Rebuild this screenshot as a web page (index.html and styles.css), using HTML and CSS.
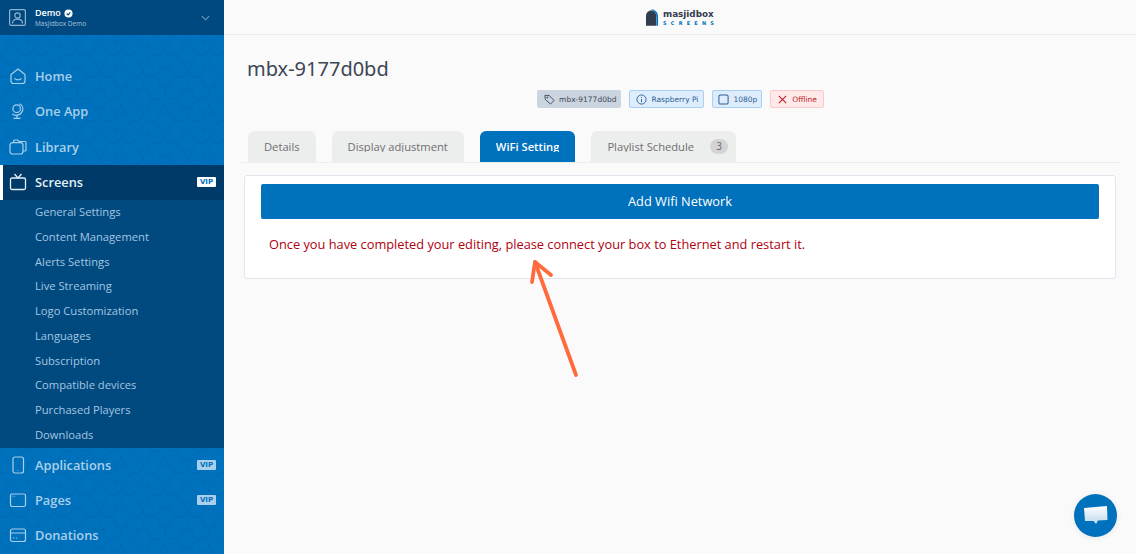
FILE: index.html
```html
<!DOCTYPE html>
<html lang="en">
<head>
<meta charset="utf-8">
<title>mbx-9177d0bd</title>
<link rel="stylesheet" href="styles.css">
</head>
<body>
<div class="app">
  <aside class="sidebar">
    <div class="account">
      <svg class="account-icon" viewBox="0 0 17 17" fill="none" stroke="currentColor" stroke-width="1.200"><rect x=".6" y=".6" width="15.800" height="15.800" rx="1.500"/><circle cx="8.500" cy="6.500" r="2.700"/><path d="M3.500 14.500c0-3 2-4.300 5-4.300s5 1.300 5 4.300"/></svg>
      <div class="account-text">
        <div class="account-name">Demo <svg class="verified" viewBox="0 0 10 10"><circle cx="5" cy="5" r="4.500" fill="#fff"/><path d="M3 5l1.500 1.500L7 3.800" fill="none" stroke="#004a80" stroke-width="1.200"/></svg></div>
        <div class="account-org">Masjidbox Demo</div>
      </div>
      <svg class="chevron" viewBox="0 0 10 6" fill="none" stroke="currentColor" stroke-width="1.200"><path d="M1 1l4 4 4-4"/></svg>
    </div>
    <nav class="nav">
      <a class="nav-item first">
        <svg class="nav-icon" viewBox="0 0 18 18" fill="none" stroke="currentColor" stroke-width="1.200"><path d="M2 7.500L9 2l7 5.500V14a2.500 2.500 0 0 1-2.500 2.500h-9A2.500 2.500 0 0 1 2 14z"/><path d="M5.500 11.500c2 1.500 5 1.500 7 0"/></svg>
        <span>Home</span>
      </a>
      <a class="nav-item">
        <svg class="nav-icon" viewBox="0 0 18 18" fill="none" stroke="currentColor" stroke-width="1.200"><circle cx="7.700" cy="6.700" r="3.800"/><path d="M10.500 1.800c3 1.500 4 4.500 3 7s-3.500 4.500-6.500 4.500c-1.500 0-2.700-.5-3.700-1.300"/><path d="M8 13.300v3M4.500 16.400h7"/></svg>
        <span>One App</span>
      </a>
      <a class="nav-item">
        <svg class="nav-icon" viewBox="0 0 18 18" fill="none" stroke="currentColor" stroke-width="1.200"><path d="M4.700 4.700V3a1 1 0 0 1 1-1h3l1.500 1.500H16a1 1 0 0 1 1 1V12a1 1 0 0 1-1 1h-2"/><rect x="1" y="4.700" width="13" height="11.300" rx="2.500"/></svg>
        <span>Library</span>
      </a>
      <a class="nav-item active">
        <svg class="nav-icon" viewBox="0 0 18 18" fill="none" stroke="currentColor" stroke-width="1.300"><rect x="1.500" y="5" width="15" height="11.500" rx="1.500"/><path d="M5.500 1l3.500 4 3.500-4"/></svg>
        <span>Screens</span>
        <b class="vip">VIP</b>
      </a>
      <div class="subnav">
        <a class="sub-item">General Settings</a>
        <a class="sub-item">Content Management</a>
        <a class="sub-item">Alerts Settings</a>
        <a class="sub-item">Live Streaming</a>
        <a class="sub-item">Logo Customization</a>
        <a class="sub-item">Languages</a>
        <a class="sub-item">Subscription</a>
        <a class="sub-item">Compatible devices</a>
        <a class="sub-item">Purchased Players</a>
        <a class="sub-item">Downloads</a>
      </div>
      <a class="nav-item">
        <svg class="nav-icon" viewBox="0 0 18 18" fill="none" stroke="currentColor" stroke-width="1.200"><rect x="4" y="1" width="10.500" height="16" rx="2"/><path d="M9 14v.6"/></svg>
        <span>Applications</span>
        <b class="vip">VIP</b>
      </a>
      <a class="nav-item">
        <svg class="nav-icon" viewBox="0 0 18 18" fill="none" stroke="currentColor" stroke-width="1.200"><rect x="1.500" y="3" width="15" height="12.500" rx="1.800"/><path d="M3.500 5.300h.6M5.500 5.300h.6"/></svg>
        <span>Pages</span>
        <b class="vip">VIP</b>
      </a>
      <a class="nav-item">
        <svg class="nav-icon" viewBox="0 0 18 18" fill="none" stroke="currentColor" stroke-width="1.200"><rect x="1.500" y="3" width="15" height="12.500" rx="2"/><path d="M1.500 7h15M4 12h1.500M7 12h1"/></svg>
        <span>Donations</span>
      </a>
    </nav>
  </aside>
  <main class="main">
    <header class="topbar">
      <div class="logo">
        <svg class="logo-mark" viewBox="0 0 14 18"><path d="M0 18V7.500C0 4 2.500 1.500 5.500 1.500S11 4 11 7.500V18z" fill="#333b4f"/><path d="M6 0c4 .5 7 3.500 7 8v10h-1.800V8c0-3.500-2-6-5.200-7z" fill="#0071bc"/></svg>
        <div class="logo-text">
          <div class="logo-name">masjidbox</div>
          <div class="logo-sub">SCREENS</div>
        </div>
      </div>
    </header>
    <div class="content">
      <h1 class="title">mbx-9177d0bd</h1>
      <div class="badges">
        <span class="badge badge-tag"><svg viewBox="0 0 12 12" fill="none" stroke="currentColor" stroke-width="1"><path d="M1 1.500h4.500l5.500 5.500-4 4L1.500 6z"/><circle cx="3.700" cy="3.800" r=".6"/></svg>mbx-9177d0bd</span>
        <span class="badge badge-info"><svg viewBox="0 0 12 12" fill="none" stroke="currentColor" stroke-width="1"><circle cx="6" cy="6" r="5"/><path d="M6 5.500V9M6 3.200v1"/></svg>Raspberry Pi</span>
        <span class="badge badge-info badge-res"><svg viewBox="0 0 12 12" fill="none" stroke="currentColor" stroke-width="1.100"><rect x="1" y="1" width="10" height="10" rx="1.500"/></svg>1080p</span>
        <span class="badge badge-off"><svg viewBox="0 0 12 12" fill="none" stroke="currentColor" stroke-width="1.100"><path d="M2 2l8 8M10 2l-8 8"/></svg>Offline</span>
      </div>
      <div class="tabs">
        <a class="tab"><span class="tab-label">Details</span></a>
        <a class="tab"><span class="tab-label">Display adjustment</span></a>
        <a class="tab tab-active"><span class="tab-label">WiFi Setting</span></a>
        <a class="tab tab-playlist"><span class="tab-label">Playlist Schedule</span><i class="count">3</i></a>
      </div>
      <section class="card">
        <button class="add-btn">Add Wifi Network</button>
        <p class="warning">Once you have completed your editing, please connect your box to Ethernet and restart it.</p>
      </section>
      <svg class="arrow" viewBox="0 0 60 130" fill="none" stroke="#ff6b3d" stroke-width="3.800" stroke-linecap="round" stroke-linejoin="round"><path d="M52 120L11 7"/><path d="M8 27L11 7l16 13"/></svg>
    </div>
    <button class="chat" aria-label="Chat">
      <svg viewBox="0 0 24 20"><defs><linearGradient id="g" x1="0" y1="0" x2="0" y2="1"><stop offset="0" stop-color="#fff"/><stop offset="1" stop-color="#bcd8ee"/></linearGradient></defs><path d="M0 2l23-2 .5 14-9.500.5-2 3.500-2.500-3L1 15z" fill="url(#g)"/></svg>
    </button>
  </main>
</div>
</body>
</html>
```
FILE: styles.css
```css
* { box-sizing: border-box; }
html, body { margin: 0; height: 100%; }
body { font-family: "Open Sans", sans-serif; background: #fafafb; overflow: hidden; }
a { display: block; }

.app { display: flex; height: 554px; }

.sidebar {
  width: 224px;
  flex: none;
  height: 554px;
  overflow: hidden;
  background-color: #0071bc;
  background-image: url("data:image/svg+xml,%3Csvg xmlns='http://www.w3.org/2000/svg' width='44' height='44'%3E%3Cg fill='none' stroke='%23005a98' stroke-opacity='.3' stroke-width='1'%3E%3Cpath d='M6 0l5 3 5-3 0 6 6 5-6 5 0 6-5-3-5 3 0-6-6-5 6-5z'/%3E%3Cpath d='M28 22l5 3 5-3 0 6 6 5-6 5 0 6-5-3-5 3 0-6-6-5 6-5z'/%3E%3Cpath d='M22 11h6l5-5 5 5h6M0 33h6l5-5 5 5h6M33 0v6M11 22v6M33 16v6M11 38v6'/%3E%3C/g%3E%3C/svg%3E");
  color: #a9cfea;
}
.account {
  height: 35px;
  display: flex;
  align-items: center;
  padding: 0 14px 0 9px;
  background-color: rgba(0, 48, 92, .62);
  color: #8fb4d2;
}
.account-icon { width: 17px; height: 17px; flex: none; }
.account-text { margin-left: 9px; flex: 1; }
.account-name { font-size: 9px; line-height: 12px; font-weight: 600; color: #fff; display: flex; align-items: center; gap: 3px; }
.verified { width: 9px; height: 9px; }
.account-org { font-size: 6.500px; line-height: 9px; color: #a5c4dc; }
.chevron { width: 9px; height: 6px; flex: none; color: #6f9dc2; }

.nav { display: block; }
.nav-item {
  height: 35.400px;
  display: flex;
  align-items: center;
  padding: 0 8px 0 9px;
  font-size: 12.800px;
  font-weight: 600;
}
.nav-item.first { margin-top: 23.400px; }
.subnav ~ .nav-item { height: 35px; }
.nav-item span { margin-left: 8px; flex: 1; }
.nav-icon { width: 18px; height: 18px; flex: none; }
.nav-item.active {
  height: 35px;
  background: #003a68;
  color: #e2eff8;
  border-left: 3px solid #fff;
  padding-left: 6px;
}
.vip {
  font-family: "DejaVu Sans", sans-serif;
  font-size: 7px;
  line-height: 10px;
  font-weight: 700;
  width: 19px;
  text-align: center;
  border-radius: 1px;
  background: #a9cfea;
  color: #0071bc;
}
.active .vip { background: #fff; }
.subnav { background-color: rgba(0, 50, 92, .62); height: 248px; padding-top: .55px; }
.sub-item {
  height: 24.750px;
  line-height: 24.750px;
  padding-left: 35px;
  font-size: 11.200px;
  color: #a4c6e0;
}

.main { flex: 1; min-width: 0; position: relative; }
.topbar {
  height: 35px;
  border-bottom: 1px solid #eceef0;
  display: flex;
  justify-content: center;
  align-items: center;
  padding-left: 1px;
}
.logo { display: flex; align-items: center; gap: 4px; }
.logo-mark { width: 13px; height: 17px; }
.logo-name { font-family: "DejaVu Sans", sans-serif; font-size: 8.800px; line-height: 11px; font-weight: 700; color: #333b4f; }
.logo-sub { font-family: "DejaVu Sans", sans-serif; font-size: 5px; line-height: 6px; font-weight: 700; letter-spacing: 4.200px; color: #0071bc; white-space: nowrap; width: 52px; }

.content { padding: 0 16px 0 17px; position: relative; height: 519px; }
.title { margin: 0; padding: 20px 0 0 6px; font-size: 20px; line-height: 27px; font-weight: 400; color: #3d4654; font-family: "Noto Sans", sans-serif; }
.badges { display: flex; justify-content: center; gap: 8px; margin-top: 8px; height: 18px; }
.badge {
  display: flex;
  align-items: center;
  gap: 4px;
  height: 18px;
  padding: 0 5px 0 6px;
  border-radius: 2px;
  border: 1px solid transparent;
  font-family: "DejaVu Sans", sans-serif;
  font-size: 7.500px;
}
.badge svg { width: 11px; height: 11px; flex: none; }
.badge-tag { background: #cbd5e0; color: #3d4654; padding-right: 4px; }
.badge-info { background: #deedfd; border-color: #a8d0f5; color: #2c5d8f; }
.badge-res { padding: 0 4px 0 5px; }
.badge-off { background: #ffe9e9; border-color: #fdc8c8; color: #b81d24; padding-right: 6px; }

.tabs { display: flex; gap: 16px; margin: 23px -1px 0 0; padding-left: 7px; height: 32px; border-bottom: 1px solid #eceef0; }
.tab {
  height: 31px;
  padding: 9px 16px 0;
  border-radius: 6px 6px 0 0;
  font-size: 11.200px;
  background: #eceded;
  color: #6f6f6f;
}
.tab-label { display: block; height: 12px; line-height: 14px; overflow: hidden; white-space: nowrap; }
.tab-active { background: #0071bc; color: #fff; font-weight: 600; }
.tab-playlist { display: flex; align-items: flex-start; gap: 16px; padding-right: 8px; }
.count { font-style: normal; width: 18px; height: 15px; margin-top: -1px; line-height: 14px; border-radius: 8px; background: #d4d4d4; text-align: center; font-size: 10px; color: #666; }

.card {
  margin: 12px 4px 0 3px;
  height: 104px;
  background: #fff;
  border: 1px solid #e3e5ee;
  border-radius: 3px;
  padding: 8px 16px 0;
}
.add-btn {
  width: 100%;
  height: 35px;
  display: block;
  border: 0;
  border-radius: 2px;
  padding: 0 0 2px;
  background: #0071bc;
  color: #fff;
  font: 12.800px "Open Sans", sans-serif;
}
.warning { margin: 17px 0 0 8px; font-size: 12.800px; line-height: 17px; color: #b0000f; }

.arrow { position: absolute; left: 300px; top: 220px; width: 60px; height: 130px; }
.chat {
  position: absolute;
  right: 19px;
  bottom: 17px;
  width: 43px;
  height: 43px;
  border: 0;
  border-radius: 50%;
  padding: 0;
  background: #0071bc;
  display: flex;
  align-items: center;
  justify-content: center;
  box-shadow: 0 1px 6px rgba(0,0,0,.08);
}
.chat svg { width: 24px; height: 20px; }
```
